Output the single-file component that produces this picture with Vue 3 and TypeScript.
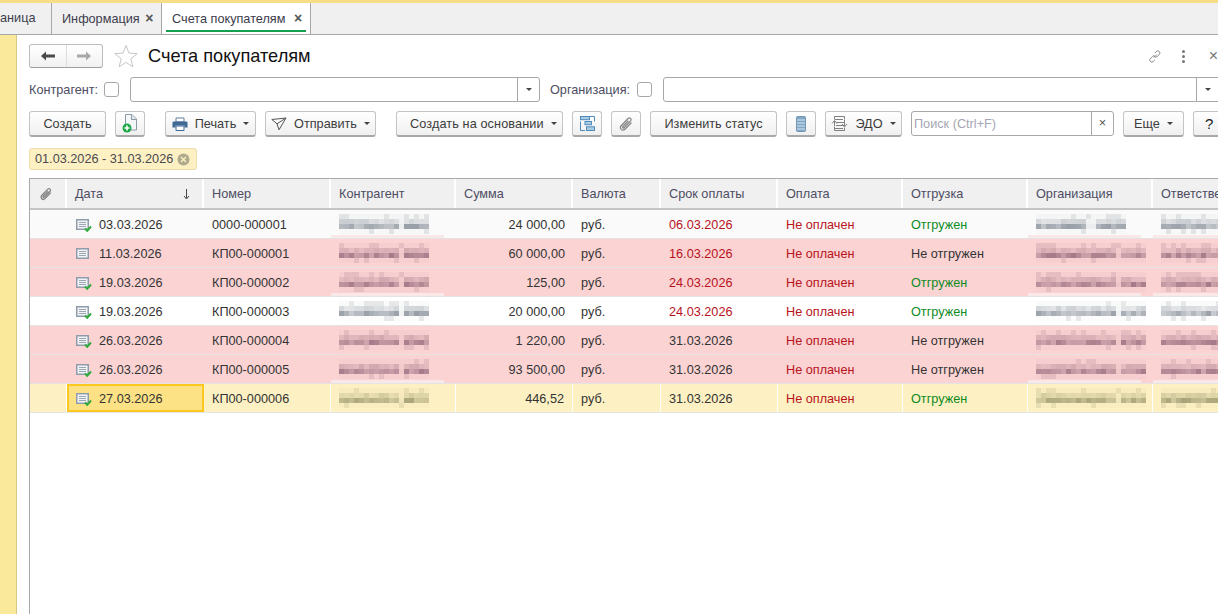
<template>
  <div class="app">
    <div class="top-stripe"></div>
    <div class="tabs">
      <div class="tab first">аница</div>
      <div class="tab info">Информация <span class="tab-x">×</span></div>
      <div class="tab active">Счета покупателям <span class="tab-x">×</span></div>
    </div>
    <div class="body">
      <div class="sidebar"></div>
      <div class="main">
        <div class="title-row">
          <div class="nav-group">
            <button class="nav-btn">
              <svg width="16" height="12" viewBox="0 0 16 12"><path d="M1 6l5-4.5V4.6h9v2.8H6v3.1z" fill="#4a4a4a" /></svg>
            </button>
            <button class="nav-btn">
              <svg width="16" height="12" viewBox="0 0 16 12"><path d="M15 6l-5-4.5V4.6H1v2.8h9v3.1z" fill="#a8a8a8" /></svg>
            </button>
          </div>
          <svg class="star" width="24" height="24" viewBox="0 0 24 24">
            <path d="M12 1.5l3 7.6 8.2.5-6.4 5.2 2.1 8-6.9-4.4-6.9 4.4 2.1-8L.8 9.6 9 9.1z" fill="none" stroke="#c6c6c6" />
          </svg>
          <h1>Счета покупателям</h1>
          <div class="title-icons">
            <svg width="17" height="17" viewBox="0 0 18 18" fill="none" stroke="#666">
              <path d="M7.5 10.5l4-4M9 4.5l2-2a2.6 2.6 0 0 1 4 3.6l-3 3a2.6 2.6 0 0 1-3 .4" />
              <path d="M9 13.5l-2 2a2.6 2.6 0 0 1-4-3.6l3-3a2.6 2.6 0 0 1 3-.4" />
            </svg>
            <span class="dots"><i></i><i></i><i></i></span>
            <span class="close">×</span>
          </div>
        </div>

        <div class="filter-row">
          <label class="f-label contr-label">Контрагент:</label>
          <span class="check"></span>
          <div class="combo first-combo"><span class="combo-arrow"><i class="caret"></i></span></div>
          <label class="f-label org-label">Организация:</label>
          <span class="check"></span>
          <div class="combo second-combo"><span class="combo-arrow"><i class="caret"></i></span></div>
        </div>

        <div class="toolbar">
          <button class="btn create">Создать</button>
          <button class="btn icon-btn">
            <svg width="16" height="19" viewBox="0 0 16 19">
              <path d="M3.5 .5h6.5l4.5 4.5v11h-11z" fill="#f4f6f8" stroke="#8c9aa8" />
              <path d="M9.5 .5v5h5" fill="#dfe5ea" stroke="#8c9aa8" />
              <circle cx="5" cy="14" r="4.5" fill="#1fa84a" />
              <path d="M5 11.5v5M2.5 14h5" stroke="#fff" stroke-width="1.6" />
            </svg>
          </button>
          <button class="btn print wide-gap">
            <svg width="16" height="14" viewBox="0 0 16 14">
              <path d="M4 1h8v4H4z" fill="#fff" stroke="#5f7f9f" />
              <path d="M1.5 4.5h13a1 1 0 0 1 1 1v5h-3v-2h-9v2h-3v-5a1 1 0 0 1 1-1z" fill="#3f6a94" />
              <path d="M4 9h8v4.5H4z" fill="#fff" stroke="#3f6a94" />
            </svg>
            Печать <i class="caret"></i>
          </button>
          <button class="btn send">
            <svg width="16" height="14" viewBox="0 0 16 14" fill="none" stroke="#555">
              <path d="M.8 2.5L15 1 8 12.8 6 6.8zM6 6.8L15 1" />
            </svg>
            Отправить <i class="caret"></i>
          </button>
          <button class="btn basis wide-gap">Создать на основании <i class="caret"></i></button>
          <button class="btn icon-btn">
            <svg width="15" height="15" viewBox="0 0 15 15" fill="none" stroke="#4f8ab8">
              <path d="M.5 5.5v9h4.5M9.5 .5h5v5" />
              <rect x=".5" y=".5" width="9" height="3.2" fill="#a9cbe4" />
              <rect x="5" y="5.5" width="6.5" height="3.2" fill="#a9cbe4" />
              <rect x="6.5" y="10.8" width="8" height="3.7" fill="#a9cbe4" />
            </svg>
          </button>
          <button class="btn icon-btn">
            <svg width="16" height="16" viewBox="0 0 16 16" fill="none" stroke="#8a8a8a" stroke-width="1.3">
              <path d="M13.5 6.5l-6.6 6.8a2.6 2.6 0 0 1-3.8-3.6l7-7.2a1.7 1.7 0 0 1 2.5 2.4l-6.6 6.8a.8.8 0 0 1-1.2-1.2l5.6-5.8" />
            </svg>
          </button>
          <button class="btn status">Изменить статус</button>
          <button class="btn icon-btn">
            <svg width="10" height="16" viewBox="0 0 10 16">
              <rect x=".5" y=".5" width="9" height="15" rx="1" fill="#7fa6c6" stroke="#7396b4" />
              <path d="M1 4h8M1 7h8M1 10h8M1 13h8" stroke="#dbe8f1" />
            </svg>
          </button>
          <button class="btn edo">
            <svg width="17" height="15" viewBox="0 0 17 15" fill="none" stroke="#808080">
              <path d="M3.5 3.5v-3h10v3M3.5 10.5v4h10v-3" />
              <path d="M4 3.5h8M5 6.5h8M5 9.5h8M4 12.5h8" />
              <path d="M3.5 5v5M1 7.5l2.5-3 2.5 3M13.5 4v6M11 8l2.5 3L16 8" />
            </svg>
            ЭДО <i class="caret"></i>
          </button>
          <div class="search">
            <span class="search-text">Поиск (Ctrl+F)</span>
            <span class="search-clear">×</span>
          </div>
          <button class="btn more">Еще <i class="caret"></i></button>
          <button class="btn help">?</button>
        </div>

        <div class="chip-row">
          <span class="chip">
            01.03.2026 - 31.03.2026
            <svg width="13" height="13" viewBox="0 0 13 13">
              <circle cx="6.5" cy="6.5" r="6" fill="#b0aa8c" />
              <path d="M4 4l5 5M9 4l-5 5" stroke="#fdf0c2" stroke-width="1.4" />
            </svg>
          </span>
        </div>

        <div class="table">
          <div class="grid-row head">
            <div class="cell h-cell clip-cell">
              <svg width="14" height="14" viewBox="0 0 16 16" fill="none" stroke="#808080" stroke-width="1.4">
                <path d="M13.5 6.5l-6.6 6.8a2.6 2.6 0 0 1-3.8-3.6l7-7.2a1.7 1.7 0 0 1 2.5 2.4l-6.6 6.8a.8.8 0 0 1-1.2-1.2l5.6-5.8" />
              </svg>
            </div>
            <div class="cell h-cell date-head">
              Дата
              <svg width="7" height="12" viewBox="0 0 7 12"><path d="M3.5 1v9M1 8l2.5 3L6 8" fill="none" stroke="#444" /></svg>
            </div>
            <div v-for="h in headers" :key="h" class="cell h-cell">{{ h }}</div>
          </div>

          <div v-for="(r, i) in rows" :key="r.num" class="grid-row row" :class="r.kind">
            <div class="cell"></div>
            <div class="cell date-cell" :class="{ selected: r.kind === 'current' }">
              <svg class="doc" width="16" height="13" viewBox="0 0 16 13">
                <rect x=".75" y=".75" width="11.5" height="9.5" fill="#f2f4f6" stroke="#8f9cab" stroke-width="1.5" />
                <path d="M3 3.5h7M3 5.5h7M3 7.5h7" stroke="#9aa6b4" />
                <path v-if="r.posted" d="M9 9.5l2.2 2.3 3.8-4.3" fill="none" stroke="#2eaa3a" stroke-width="2" />
              </svg>
              <span>{{ r.date }}</span>
            </div>
            <div class="cell">{{ r.num }}</div>
            <div class="cell blur-cell" :class="{ band: bandRows.includes(i) }">
              <svg width="112" height="20"><rect v-for="(c, k) in mosaic(i * 7 + 3, 18, [12])" :key="k" :x="c.x" :y="c.y" width="5" height="5" :fill="tone(r.kind)" :fill-opacity="c.o" /></svg>
            </div>
            <div class="cell sum">{{ r.sum }}</div>
            <div class="cell">руб.</div>
            <div class="cell" :class="{ red: r.dueRed }">{{ r.due }}</div>
            <div class="cell red">Не оплачен</div>
            <div class="cell" :class="{ green: r.shipped }">{{ r.shipped ? 'Отгружен' : 'Не отгружен' }}</div>
            <div class="cell blur-cell" :class="{ band: bandRows.includes(i) }">
              <svg width="112" height="20"><rect v-for="(c, k) in mosaic(i * 11 + 5, 22, i === 0 ? [10, 11] : [16])" :key="k" :x="c.x" :y="c.y" width="5" height="5" :fill="tone(r.kind)" :fill-opacity="i === 0 && c.x > 85 ? 0 : c.o" /></svg>
            </div>
            <div class="cell blur-cell" :class="{ band: bandRows.includes(i) }">
              <svg width="70" height="20"><rect v-for="(c, k) in mosaic(i * 13 + 9, 12, [])" :key="k" :x="c.x" :y="c.y" width="5" height="5" :fill="tone(r.kind)" :fill-opacity="c.o" /></svg>
            </div>
          </div>
        </div>
      </div>
    </div>
  </div>
</template>

<script setup lang="ts">
type Row = {
  date: string
  num: string
  sum: string
  due: string
  dueRed: boolean
  shipped: boolean
  posted: boolean
  kind: 'plain' | 'overdue' | 'white' | 'current'
}

const headers = ['Номер', 'Контрагент', 'Сумма', 'Валюта', 'Срок оплаты', 'Оплата', 'Отгрузка', 'Организация', 'Ответственный']

const rows: Row[] = [
  { date: '03.03.2026', num: '0000-000001', sum: '24 000,00', due: '06.03.2026', dueRed: true, shipped: true, posted: true, kind: 'plain' },
  { date: '11.03.2026', num: 'КП00-000001', sum: '60 000,00', due: '16.03.2026', dueRed: true, shipped: false, posted: false, kind: 'overdue' },
  { date: '19.03.2026', num: 'КП00-000002', sum: '125,00', due: '24.03.2026', dueRed: true, shipped: true, posted: true, kind: 'overdue' },
  { date: '19.03.2026', num: 'КП00-000003', sum: '20 000,00', due: '24.03.2026', dueRed: true, shipped: true, posted: true, kind: 'white' },
  { date: '26.03.2026', num: 'КП00-000004', sum: '1 220,00', due: '31.03.2026', dueRed: false, shipped: false, posted: true, kind: 'overdue' },
  { date: '26.03.2026', num: 'КП00-000005', sum: '93 500,00', due: '31.03.2026', dueRed: false, shipped: false, posted: true, kind: 'overdue' },
  { date: '27.03.2026', num: 'КП00-000006', sum: '446,52', due: '31.03.2026', dueRed: false, shipped: true, posted: true, kind: 'current' },
]

// rows whose pixelated names leave a pale strip along the bottom edge
const bandRows = [0, 2, 5]

// the names are pixelated in the screenshot, so a small mosaic stands in for them
const mosaic = (seed: number, cols: number, gaps: number[]) => {
  const cells: { x: number; y: number; o: number }[] = []
  let s = seed * 9301 + 49297
  const next = () => {
    s = (s * 9301 + 49297) % 233280
    return s / 233280
  }
  for (let x = 0; x < cols; x++) {
    const gap = gaps.includes(x)
    cells.push({ x: x * 5, y: 0, o: next() < 0.3 ? 0.14 : 0.03 })
    cells.push({ x: x * 5, y: 5, o: gap ? 0.05 : 0.14 + next() * 0.14 })
    cells.push({ x: x * 5, y: 10, o: gap ? 0.08 : 0.3 + next() * 0.28 })
    cells.push({ x: x * 5, y: 15, o: next() < 0.2 ? 0.14 : 0.02 })
  }
  return cells
}

const tone = (kind: Row['kind']) => {
  if (kind === 'overdue') return '#6a3a55'
  if (kind === 'current') return '#6a6a40'
  return '#4e5a68'
}
</script>

<style scoped>
.app {
  width: 1218px;
  height: 614px;
  overflow: hidden;
  display: flex;
  flex-direction: column;
  font-family: "Liberation Sans", Arial, sans-serif;
  font-size: 12.7px;
  color: #333;
  background: #fff;
}

.top-stripe {
  height: 3px;
  background: #f7dd84;
}

.tabs {
  height: 32px;
  flex: none;
  box-sizing: border-box;
  display: flex;
  background: #f0f0f0;
  border-bottom: 1px solid #a8a8a8;
}

.tab {
  height: 31px;
  box-sizing: border-box;
  line-height: 31px;
  border-right: 1px solid #a8a8a8;
  white-space: nowrap;
  color: #3c3c4c;
}

.tab.first {
  width: 52px;
  text-align: right;
  padding-right: 16px;
}

.tab.info {
  width: 110px;
  padding-left: 10px;
}

.tab.info .tab-x {
  margin-left: 2px;
}

.tab.active {
  width: 149px;
  padding-left: 10px;
  background: #fff;
  position: relative;
}

.tab.active::after {
  content: "";
  position: absolute;
  left: 4px;
  right: 4px;
  bottom: 2px;
  height: 2px;
  background: #14a04e;
}

.tab-x {
  margin-left: 5px;
  font-weight: bold;
  font-size: 14px;
  color: #555;
}

.body {
  flex: 1;
  display: flex;
  min-height: 0;
}

.sidebar {
  width: 16px;
  flex: none;
  background: #fbe99b;
  border-right: 1px solid #d6c884;
}

.main {
  flex: 1;
  min-width: 0;
  padding-left: 12px;
  display: flex;
  flex-direction: column;
}

.title-row {
  height: 42px;
  flex: none;
  display: flex;
  align-items: center;
}

.nav-group {
  display: flex;
  width: 74px;
  height: 24px;
  box-sizing: border-box;
  border: 1px solid #bdbdbd;
  border-bottom-color: #9f9f9f;
  border-radius: 3px;
  background: linear-gradient(#fff, #f1f1f1);
}

.nav-btn {
  flex: 1;
  padding: 0;
  border: 0;
  background: none;
  display: flex;
  align-items: center;
  justify-content: center;
}

.nav-btn + .nav-btn {
  border-left: 1px solid #dcdcdc;
}

.star {
  margin-left: 11px;
}

h1 {
  margin: 0 0 0 10px;
  font-size: 18.2px;
  font-weight: normal;
  color: #111;
}

.title-icons {
  margin-left: auto;
  display: flex;
  align-items: center;
  width: 70px;
  flex: none;
}

.dots {
  margin-left: 20px;
  display: flex;
  flex-direction: column;
  gap: 2px;
}

.dots i {
  width: 3px;
  height: 3px;
  background: #777;
  border-radius: 50%;
}

.close {
  margin-left: 24px;
  font-size: 16px;
  color: #777;
}

.filter-row {
  height: 25px;
  flex: none;
  display: flex;
  align-items: center;
  margin-bottom: 9px;
}

.f-label {
  color: #4d4d63;
  margin-right: 7px;
  white-space: nowrap;
}

.contr-label {
  width: 68px;
}

.org-label {
  margin-left: 10px;
  width: 80px;
}

.check {
  width: 15px;
  height: 15px;
  box-sizing: border-box;
  flex: none;
  border: 1px solid #a8a8a8;
  border-radius: 3px;
  margin-right: 11px;
}

.combo {
  height: 25px;
  box-sizing: border-box;
  flex: none;
  border: 1px solid #a8a8a8;
  border-radius: 3px;
  display: flex;
  justify-content: flex-end;
}

.first-combo {
  width: 410px;
}

.second-combo {
  width: 570px;
}

.second-combo .combo-arrow {
  margin-right: 14px;
}

.combo-arrow {
  width: 21px;
  border-left: 1px solid #a8a8a8;
  display: flex;
  align-items: center;
  justify-content: center;
}

.caret {
  display: inline-block;
  width: 0;
  height: 0;
  border-left: 3px solid transparent;
  border-right: 3px solid transparent;
  border-top: 3px solid #444;
}

.toolbar {
  height: 26px;
  flex: none;
  display: flex;
  gap: 9px;
  margin-bottom: 11px;
}

.btn {
  height: 26px;
  box-sizing: border-box;
  flex: none;
  padding: 0;
  font: inherit;
  color: #3c3c3c;
  border: 1px solid #c4c4c4;
  border-bottom: 2px solid #a8a8a8;
  border-radius: 3px;
  background: linear-gradient(#fff, #f0f0f0);
  display: flex;
  align-items: center;
  justify-content: center;
  gap: 7px;
  white-space: nowrap;
}

.create {
  width: 77px;
}

.icon-btn {
  width: 30px;
}

.wide-gap {
  margin-left: 11px;
}

.print {
  width: 91px;
}

.send {
  width: 111px;
}

.basis {
  width: 167px;
  margin-left: 11px;
  justify-content: flex-start;
  padding-left: 13px;
  letter-spacing: 0.1px;
}

.status {
  width: 127px;
}

.edo {
  width: 77px;
}

.search {
  width: 203px;
  height: 25px;
  flex: none;
  box-sizing: border-box;
  border: 1px solid #a8a8a8;
  border-radius: 3px;
  display: flex;
  align-items: center;
  justify-content: space-between;
}

.search-text {
  padding-left: 2px;
  color: #a6a6b4;
}

.search-clear {
  width: 21px;
  height: 23px;
  line-height: 22px;
  text-align: center;
  border-left: 1px solid #a8a8a8;
  color: #555;
}

.more {
  width: 61px;
}

.help {
  width: 40px;
  justify-content: flex-start;
  padding-left: 11px;
  font-size: 15px;
  color: #222;
}

.chip-row {
  height: 21px;
  flex: none;
  margin-bottom: 9px;
}

.chip {
  display: inline-flex;
  align-items: center;
  gap: 4px;
  box-sizing: border-box;
  height: 22px;
  width: 168px;
  padding-left: 5px;
  background: #fdf0c2;
  border: 1px solid #ebdcaa;
  border-radius: 3px;
  color: #4a4a50;
  white-space: nowrap;
}

.table {
  flex: 1;
  border-left: 1px solid #a8a8a8;
  border-top: 1px solid #a8a8a8;
  margin-right: -60px;
}

.grid-row {
  display: grid;
  grid-template-columns: 37px 137px 127px 125px 117px 88px 117px 125px 125px 125px 125px;
}

.head {
  height: 31px;
  background: #f0f0f0;
  border-bottom: 2px solid #c4c4c4;
  box-sizing: border-box;
}

.row {
  height: 29px;
  box-sizing: border-box;
  border-bottom: 1px solid #e4e4e4;
}

.cell {
  box-sizing: border-box;
  display: flex;
  align-items: center;
  min-width: 0;
  padding-left: 8px;
  padding-top: 2px;
  white-space: nowrap;
  color: #333;
}

.h-cell {
  padding-top: 0;
  border-right: 2px solid #fff;
  color: #4d4d63;
}

.clip-cell {
  padding-left: 9px;
}

.date-head {
  justify-content: space-between;
  padding-right: 12px;
}

.plain {
  background: #fafafa;
}

.white {
  background: #fff;
}

.overdue {
  background: #fbd3d3;
}

.current {
  background: #fdf1c4;
}

.current .cell {
  border-right: 1px solid #fff;
}

.date-cell {
  padding-left: 9px;
  gap: 7px;
}

.selected {
  background: #fde285;
  border: 2px solid #fcc81f !important;
  padding-left: 7px;
}

.sum {
  justify-content: flex-end;
  padding-right: 8px;
}

.red {
  color: #b8121c;
}

.green {
  color: #0f8a1e;
}

.blur-cell {
  position: relative;
  padding-top: 0;
}

.band::after {
  content: "";
  position: absolute;
  left: 0;
  width: 113px;
  bottom: 0;
  height: 3px;
  background: #f8e8e8;
}
</style>
